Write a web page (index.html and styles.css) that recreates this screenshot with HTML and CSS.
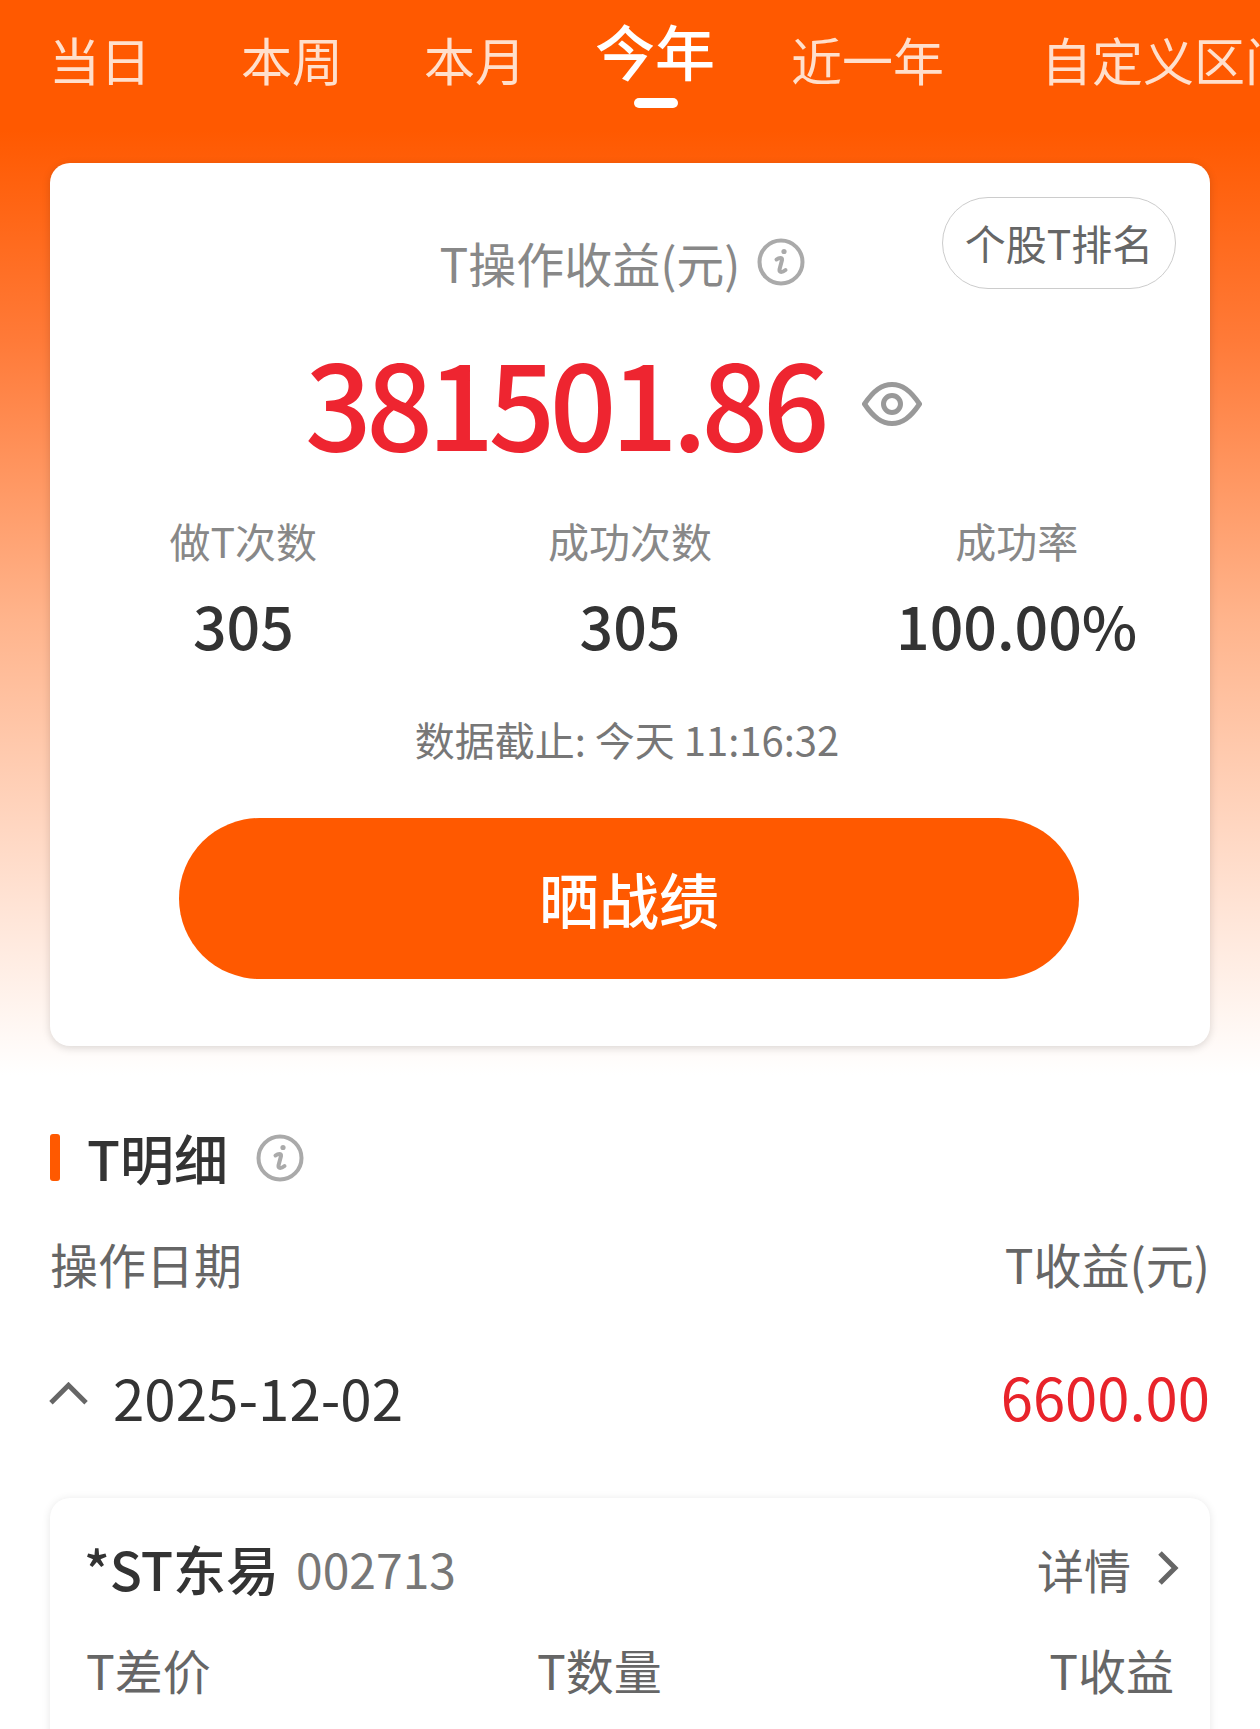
FILE: index.html
```html
<!DOCTYPE html>
<html lang="zh-CN">
<head>
    <meta charset="UTF-8">
    <meta name="viewport" content="width=device-width, initial-scale=1.0">
    <title>T操作收益</title>
    <link rel="stylesheet" href="styles.css">
</head>
<body>
    <div class="page">
        <!-- Period tabs -->
        <div class="tabs">
            <div class="tab tab-day">当日</div>
            <div class="tab tab-week">本周</div>
            <div class="tab tab-month">本月</div>
            <div class="tab tab-active">今年</div>
            <div class="tab tab-recent">近一年</div>
            <div class="tab tab-custom">自定义区间</div>
        </div>

        <!-- Summary card -->
        <div class="summary">
            <div class="rank-btn">个股T排名</div>
            <div class="summary-title">
                <span>T操作收益(元)</span>
                <svg class="info-icon" viewBox="0 0 48 48"><circle cx="24" cy="24" r="21.5"/><circle class="info-dot" cx="27" cy="13.5" r="2.6"/><path d="M19.5 21.5 C22 19.5 25.5 19 25 22 L22.5 31.5 C22 35 25.5 34.5 28.5 32"/></svg>
            </div>
            <div class="summary-amount">
                <span class="amount">381501.86</span>
                <svg class="eye-icon" viewBox="0 0 60 44"><path d="M2.5 22 C12 8 20 2.5 30 2.5 C40 2.5 48 8 57.5 22 C48 36 40 41.5 30 41.5 C20 41.5 12 36 2.5 22 Z"/><circle cx="30" cy="22" r="8.5"/></svg>
            </div>
            <div class="stats">
                <div class="stat"><div class="stat-label">做T次数</div><div class="stat-value">305</div></div>
                <div class="stat"><div class="stat-label">成功次数</div><div class="stat-value">305</div></div>
                <div class="stat"><div class="stat-label">成功率</div><div class="stat-value">100.00%</div></div>
            </div>
            <div class="updated">数据截止: 今天 11:16:32</div>
            <div class="share-btn">晒战绩</div>
        </div>

        <!-- Detail list -->
        <div class="section-title">
            <i class="section-bar"></i>
            <span>T明细</span>
            <svg class="info-icon" viewBox="0 0 48 48"><circle cx="24" cy="24" r="21.5"/><circle class="info-dot" cx="27" cy="13.5" r="2.6"/><path d="M19.5 21.5 C22 19.5 25.5 19 25 22 L22.5 31.5 C22 35 25.5 34.5 28.5 32"/></svg>
        </div>
        <div class="list-head">
            <span>操作日期</span>
            <span>T收益(元)</span>
        </div>
        <div class="day-row">
            <div class="day-date">
                <svg class="chevron-up" viewBox="0 0 40 24"><path d="M2 21 L20 3 L38 21"/></svg>
                <span>2025-12-02</span>
            </div>
            <span class="day-profit">6600.00</span>
        </div>
        <div class="trade">
            <div class="trade-top">
                <div class="trade-name"><b>*ST东易</b><span>002713</span></div>
                <div class="trade-link">
                    <span>详情</span>
                    <svg class="chevron-right" viewBox="0 0 22 36"><path d="M3 3 L18 18 L3 33"/></svg>
                </div>
            </div>
            <div class="trade-cols">
                <span>T差价</span>
                <span>T数量</span>
                <span>T收益</span>
            </div>
        </div>
    </div>
</body>
</html>
```

FILE: styles.css
```css
* {
    box-sizing: border-box;
}

body {
    margin: 0;
    background: #fff;
    font-family: "Noto Sans CJK SC", "Noto Sans", sans-serif;
}

.page {
    height: 1729px;
    overflow: hidden;
    background: linear-gradient(#ff5900 0, #ff5900 130px, #ff7a38 340px, #ffb48c 620px, #ffe6d9 920px, #fff 1075px);
}

/* Tabs */
.tabs {
    display: flex;
    height: 163px;
    padding: 35px 0 0 49px;
    white-space: nowrap;
    overflow: hidden;
}

.tab {
    flex: none;
    height: 48px;
    line-height: 48px;
    font-size: 51px;
    color: #ffdfcc;
}

.tab-week { margin-left: 90px; }
.tab-month { margin-left: 81px; }
.tab-recent { margin-left: 76px; }
.tab-custom { margin-left: 97px; }

.tab-active {
    position: relative;
    margin-left: 69px;
    margin-top: -9px;
    font-size: 60px;
    line-height: 48px;
    font-weight: 500;
    color: #fff;
}

.tab-active::after {
    content: "";
    position: absolute;
    left: 39px;
    top: 72px;
    width: 44px;
    height: 10px;
    border-radius: 5px;
    background: #fff;
}

/* Summary card */
.summary {
    position: relative;
    width: 1160px;
    height: 883px;
    margin: 0 auto 0 50px;
    padding-top: 70px;
    background: #fff;
    border-radius: 20px;
    box-shadow: 0 2px 8px rgba(0, 0, 0, 0.15);
}

.rank-btn {
    position: absolute;
    top: 34px;
    right: 34px;
    width: 234px;
    height: 92px;
    border: 1.5px solid #ccc;
    border-radius: 46px;
    text-align: center;
    line-height: 88px;
    font-size: 41px;
    color: #666;
}

.summary-title {
    display: flex;
    justify-content: center;
    align-items: center;
    gap: 16px;
    height: 58px;
    padding-right: 16px;
    font-size: 48px;
    color: #888;
}

.info-icon {
    flex: none;
    width: 48px;
    height: 48px;
    fill: none;
    stroke: #aaa;
    stroke-width: 4;
    stroke-linecap: round;
}

.info-dot {
    fill: #aaa;
    stroke: none;
}

.summary-amount {
    display: flex;
    justify-content: center;
    align-items: center;
    gap: 38px;
    height: 120px;
    margin-top: 49px;
    padding-right: 33px;
}

.amount {
    font-size: 117px;
    line-height: 120px;
    font-weight: 500;
    letter-spacing: -5.5px;
    color: #ee2530;
}

.eye-icon {
    width: 60px;
    height: 44px;
    margin-top: 8px;
    fill: none;
    stroke: #999;
    stroke-width: 5;
}

.stats {
    display: grid;
    grid-template-columns: repeat(3, 1fr);
    margin-top: 54px;
    text-align: center;
}

.stat-label {
    height: 52px;
    line-height: 52px;
    font-size: 41px;
    color: #888;
}

.stat-value {
    margin-top: 29px;
    height: 60px;
    line-height: 60px;
    font-size: 59px;
    font-weight: 500;
    color: #333;
}

.updated {
    margin-top: 59px;
    padding-right: 6px;
    height: 50px;
    line-height: 50px;
    text-align: center;
    font-size: 40px;
    color: #777;
}

.share-btn {
    width: 900px;
    height: 161px;
    margin: 54px 0 0 129px;
    border-radius: 81px;
    background: #ff5900;
    text-align: center;
    line-height: 159px;
    font-size: 60px;
    font-weight: 500;
    color: #fff;
}

/* Detail list */
.section-title {
    display: flex;
    align-items: center;
    height: 47px;
    margin: 88px 0 0 50px;
    font-size: 54px;
    font-weight: 500;
    color: #333;
}

.section-bar {
    width: 10px;
    height: 47px;
    margin-right: 27px;
    border-radius: 3px;
    background: #ff5900;
}

.section-title .info-icon {
    margin-left: 28px;
}

.list-head {
    display: flex;
    justify-content: space-between;
    height: 60px;
    line-height: 60px;
    margin: 52px 50px 0 50px;
    font-size: 48px;
    color: #666;
}

.day-row {
    display: flex;
    justify-content: space-between;
    align-items: center;
    height: 66px;
    margin: 70px 50px 0 49px;
}

.day-date {
    display: flex;
    align-items: center;
    gap: 25px;
    font-size: 56.5px;
    color: #333;
}

.chevron-up {
    width: 39px;
    height: 24px;
    margin-top: -4px;
    fill: none;
    stroke: #666;
    stroke-width: 5;
}

.day-profit {
    font-size: 58px;
    color: #e8232a;
}

.trade {
    width: 1160px;
    height: 400px;
    margin: 69px 0 0 50px;
    padding: 40px 36px 0;
    background: #fff;
    border-radius: 20px;
    box-shadow: 0 1px 8px rgba(0, 0, 0, 0.1);
}

.trade-top {
    display: flex;
    justify-content: space-between;
    align-items: center;
    height: 60px;
}

.trade-name {
    display: flex;
    align-items: center;
    gap: 17px;
    margin-left: -2px;
}

.trade-name b {
    font-size: 53px;
    font-weight: 500;
    color: #333;
}

.trade-name span {
    font-size: 48px;
    color: #777;
}

.trade-link {
    display: flex;
    align-items: center;
    gap: 26px;
    margin-right: -5px;
    font-size: 47px;
    color: #666;
}

.chevron-right {
    width: 22px;
    height: 36px;
    fill: none;
    stroke: #666;
    stroke-width: 5;
}

.trade-cols {
    display: grid;
    grid-template-columns: 451px 1fr auto;
    height: 60px;
    line-height: 60px;
    margin-top: 41px;
    font-size: 48px;
    color: #666;
}
```
